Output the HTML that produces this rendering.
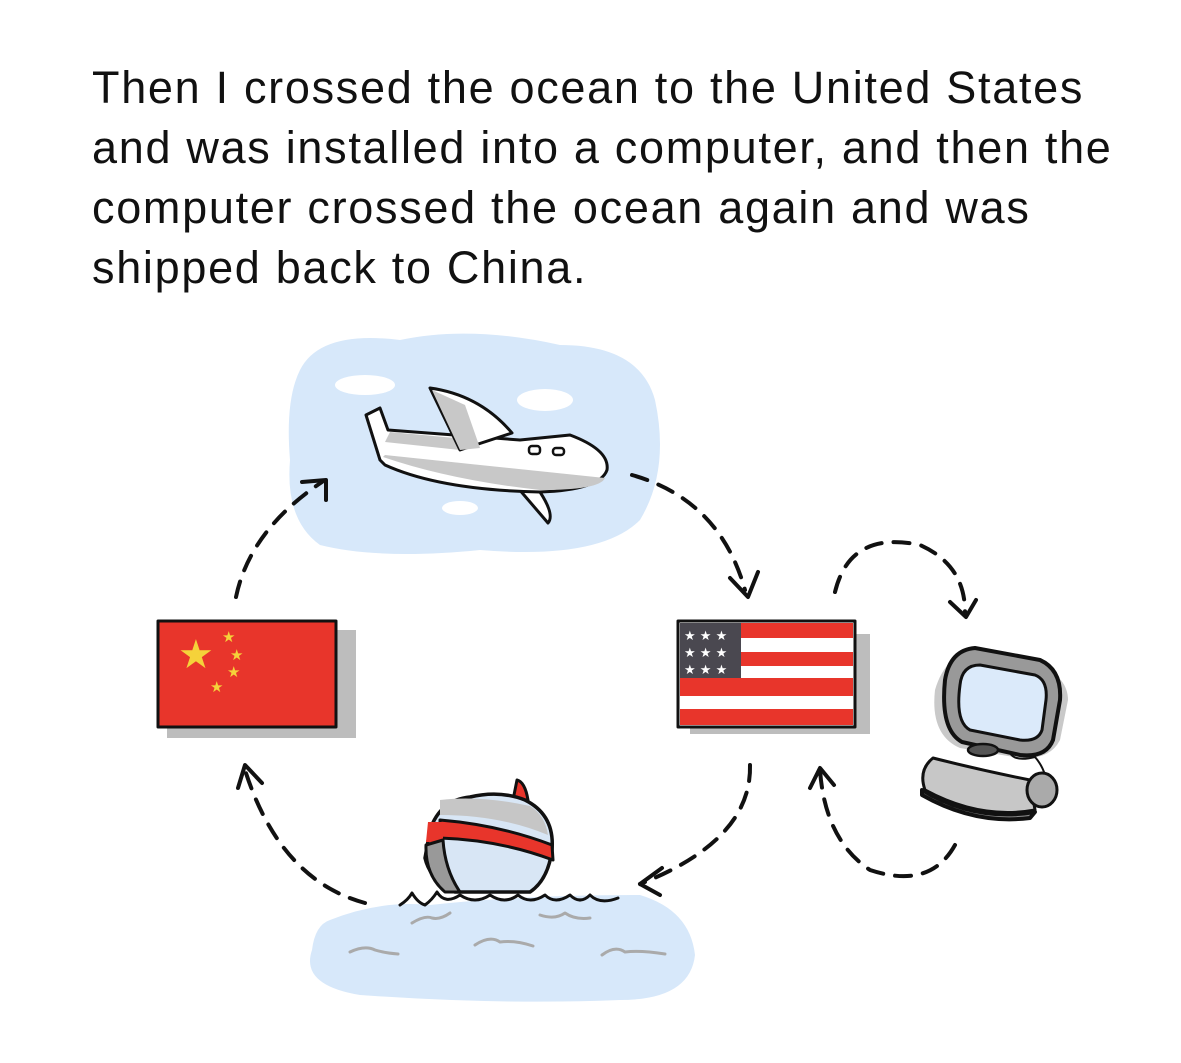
<!DOCTYPE html>
<html><head><meta charset="utf-8"><style>
html,body{margin:0;padding:0;background:#fff;}
body{width:1181px;height:1063px;position:relative;overflow:hidden;}
.t{position:absolute;left:92px;top:58px;font-family:"Liberation Sans",sans-serif;font-size:45px;letter-spacing:1.7px;line-height:60px;color:#111;white-space:nowrap;}
svg{position:absolute;left:0;top:0;}
</style></head><body>
<div class="t">Then I crossed the ocean to the United States<br>and was installed into a computer, and then the<br>computer crossed the ocean again and was<br>shipped back to China.</div>
<svg width="1181" height="1063" viewBox="0 0 1181 1063">
<g fill="none" stroke="#111" stroke-width="4" stroke-linecap="round" stroke-linejoin="round">
<path d="M300 370 Q320 330 400 340 Q470 325 560 345 Q640 345 655 400 Q670 470 640 520 Q600 560 480 550 Q380 560 320 545 Q285 520 290 460 Q285 400 300 370Z" fill="#d7e8fa" stroke="none"/>
<ellipse cx="365" cy="385" rx="30" ry="10" fill="#fff" stroke="none"/>
<ellipse cx="545" cy="400" rx="28" ry="11" fill="#fff" stroke="none"/>
<ellipse cx="460" cy="508" rx="18" ry="7" fill="#fff" stroke="none"/>
<path d="M518 488 L548 523 Q555 515 540 492Z" fill="#fff" stroke-width="3"/>
<path d="M366 415 L380 408 L388 430 L520 440 L570 435 Q610 450 607 470 Q600 490 540 492 Q440 490 385 465 L380 460 Z" fill="#fff" stroke-width="3"/>
<path d="M383 457 Q450 480 540 490 Q600 490 605 478 L480 465 L385 455Z" fill="#c8c8c8" stroke="none"/>
<path d="M390 432 L455 438 L460 450 L385 442Z" fill="#c8c8c8" stroke="none"/>
<path d="M430 388 Q480 395 512 433 L460 450 Z" fill="#fff" stroke-width="3"/>
<path d="M432 390 L460 450 L480 448 L465 405Z" fill="#c8c8c8" stroke="none"/>
<rect x="529" y="446" width="11" height="8" rx="3" stroke-width="2.5"/>
<rect x="553" y="448" width="11" height="7" rx="3" stroke-width="2.5"/>
<rect x="167" y="630" width="189" height="108" fill="#bdbdbd" stroke="none"/>
<rect x="158" y="621" width="178" height="106" fill="#e8352b" stroke-width="3"/>
<text x="178" y="668" font-size="40" fill="#f5d23a" stroke="none" font-family="DejaVu Sans">★</text>
<g fill="#f5d23a" stroke="none" font-size="15" font-family="DejaVu Sans"><text x="222" y="642">★</text><text x="230" y="660">★</text><text x="227" y="677">★</text><text x="210" y="692">★</text></g>
<rect x="690" y="634" width="180" height="100" fill="#bdbdbd" stroke="none"/>
<rect x="678" y="621" width="177" height="106" fill="#fff" stroke-width="3"/>
<g fill="#e8352b" stroke="none"><rect x="741" y="623" width="112" height="15"/><rect x="741" y="652" width="112" height="14"/><rect x="680" y="678" width="173" height="18"/><rect x="680" y="709" width="173" height="16"/></g>
<rect x="680" y="623" width="61" height="55" fill="#4a4850" stroke="none"/>
<g fill="#fff" stroke="none" font-size="13" font-family="DejaVu Sans"><text x="684" y="640">★ ★ ★</text><text x="684" y="657">★ ★ ★</text><text x="684" y="674">★ ★ ★</text></g>
<path d="M935 690 Q945 655 975 650 L1040 665 Q1068 678 1068 700 L1060 740 Q1050 760 1020 758 L960 748 Q930 735 935 690Z" fill="#c9c9c9" stroke="none"/>
<path d="M945 680 Q950 650 975 648 L1040 660 Q1062 670 1060 700 L1053 740 Q1046 758 1020 755 L962 742 Q940 730 945 680Z" fill="#999" stroke-width="4"/>
<path d="M960 685 Q962 665 980 665 L1035 675 Q1048 680 1046 700 L1042 730 Q1038 742 1020 740 L970 730 Q955 722 960 685Z" fill="#dbeafa" stroke-width="3"/>
<path d="M978 745 L972 752 L990 755 L992 745Z" fill="#c33" stroke-width="2"/>
<ellipse cx="983" cy="750" rx="15" ry="6" fill="#555" stroke-width="2.5"/>
<path d="M1010 753 Q1015 762 1035 757 Q1042 765 1045 775" stroke-width="2"/>
<path d="M933 758 Q980 770 1030 780 L1035 810 Q980 820 925 790 Q918 770 933 758Z" fill="#c7c7c7" stroke-width="3"/>
<path d="M922 790 Q975 822 1035 812 L1030 818 Q975 825 922 795Z" fill="#888"/>
<ellipse cx="1042" cy="790" rx="15" ry="17" fill="#aaa" stroke-width="3"/>
<path d="M513 800 L517 780 Q525 782 528 800Z" fill="#e8352b" stroke-width="3"/>
<path d="M430 830 Q440 800 470 797 Q500 790 525 800 Q555 815 552 850 Q548 880 530 892 L455 892 Q430 880 425 858 Z" fill="#d8e6f5" stroke-width="3.5"/>
<path d="M440 800 Q480 795 530 806 Q545 815 548 835 Q500 815 440 815Z" fill="#c6c6c6" stroke="none"/>
<path d="M440 820 Q500 825 552 845 L553 860 Q500 840 440 838 Z" fill="#e8352b" stroke-width="3"/>
<path d="M428 822 L443 822 L443 842 L426 842Z" fill="#e8352b" stroke="none"/>
<path d="M426 845 L443 840 Q445 870 460 892 L445 892 Q425 875 426 845Z" fill="#999" stroke-width="3"/>
<path d="M330 920 Q380 900 430 905 Q520 895 640 895 Q690 910 695 955 Q690 1000 620 1000 Q500 1005 360 995 Q300 985 312 950 Q315 925 330 920Z" fill="#d7e8fa" stroke="none"/>
<path d="M400 905 Q408 900 412 893 Q418 903 425 905 Q432 900 437 892 Q445 905 460 895 Q475 905 490 895 Q505 905 518 895 Q530 905 545 895 Q555 905 570 895 Q580 905 590 895 Q600 905 618 898" stroke-width="3"/>
<g stroke="#aaa" stroke-width="3"><path d="M412 923 Q425 915 432 918 Q440 920 450 913"/><path d="M540 915 Q555 920 565 913 Q575 920 590 918"/><path d="M350 952 Q365 945 375 950 Q385 953 398 954"/><path d="M475 945 Q490 935 500 942 Q515 940 533 946"/><path d="M602 955 Q615 945 625 952 Q640 950 665 954"/></g>
<g stroke-dasharray="16 12" stroke-width="4">
<path d="M236 597 Q250 530 322 482"/>
<path d="M632 475 Q720 500 745 590"/>
<path d="M750 765 Q752 840 640 884"/>
<path d="M365 903 Q280 880 245 770"/>
<path d="M835 592 Q850 530 920 545 Q965 565 965 612"/>
<path d="M955 845 Q930 890 870 870 Q825 840 820 770"/>
</g>
<path d="M302 482 L326 480 L326 500"/>
<path d="M730 578 L748 597 L758 572"/>
<path d="M662 868 L640 884 L660 895"/>
<path d="M238 788 L245 765 L262 783"/>
<path d="M950 602 L966 617 L976 600"/>
<path d="M810 788 L820 768 L834 785"/>
</g>
</svg>
</body></html>
